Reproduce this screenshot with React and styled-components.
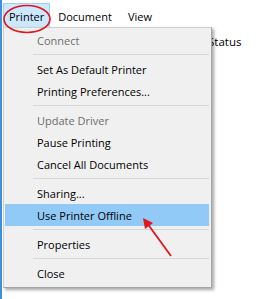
import React from "react";
import styled, { createGlobalStyle } from "styled-components";

const GlobalStyle = createGlobalStyle`
  html, body {
    margin: 0;
    padding: 0;
    background: #ffffff;
  }
  body {
    font-family: "Open Sans", "Liberation Sans", sans-serif;
    font-size: 11px;
    color: #000000;
  }
`;

const Window = styled.div`
  position: relative;
  width: 271px;
  height: 299px;
  overflow: hidden;
  background: #ffffff;
  border-left: 2px solid #3f8fe0;
  box-sizing: border-box;
`;

const MenuBar = styled.div`
  display: flex;
  align-items: stretch;
  height: 25px;
  margin-top: 3px;
  padding-left: 1px;
`;

const BarItem = styled.div`
  display: flex;
  align-items: center;
  padding: 0 ${(p) => p.$pad || 7}px;
  background: ${(p) => (p.$open ? "#cce8ff" : "transparent")};
  border: 1px solid ${(p) => (p.$open ? "#99d1ff" : "transparent")};
  border-bottom: none;
`;

const Content = styled.div`
  display: flex;
  justify-content: flex-end;
  padding: 4px 0 0 0;
`;

const ColumnHead = styled.div`
  width: 63px;
  height: 20px;
  line-height: 20px;
  font-size: 11.5px;
`;

const Dropdown = styled.div`
  position: absolute;
  left: 1px;
  top: 27px;
  width: 204px;
  padding: 1px 2px 3px 1px;
  background: #f0f0f0;
  border: 1px solid #cfcfcf;
  border-right-color: #a6a6a6;
  border-bottom-color: #a6a6a6;
  box-shadow: 2px 2px 3px rgba(0, 0, 0, 0.35);
  display: flex;
  flex-direction: column;
`;

const Item = styled.div`
  height: 22px;
  display: flex;
  align-items: center;
  padding-left: 32px;
  color: ${(p) => (p.$disabled ? "#6d6d6d" : "#000000")};
  background: ${(p) => (p.$hot ? "#91c9f7" : "transparent")};
`;

const Separator = styled.div`
  height: 1px;
  margin: 3px 0 3px 28px;
  background: #d7d7d7;
`;

const Overlay = styled.svg`
  position: absolute;
  left: -2px;
  top: 0;
  pointer-events: none;
`;

const menu = [
  { label: "Connect", disabled: true },
  "sep",
  { label: "Set As Default Printer" },
  { label: "Printing Preferences..." },
  "sep",
  { label: "Update Driver", disabled: true },
  { label: "Pause Printing" },
  { label: "Cancel All Documents" },
  "sep",
  { label: "Sharing..." },
  { label: "Use Printer Offline", hot: true },
  "sep",
  { label: "Properties" },
  "sep",
  { label: "Close" },
];

export default function App() {
  return (
    <>
      <GlobalStyle />
      <Window>
        <MenuBar>
          <BarItem $open $pad={5}>Printer</BarItem>
          <BarItem $pad={7}>Document</BarItem>
          <BarItem $pad={7}>View</BarItem>
        </MenuBar>
        <Content>
          <ColumnHead>Status</ColumnHead>
        </Content>

        <Dropdown>
          {menu.map((m, i) =>
            m === "sep" ? (
              <Separator key={i} />
            ) : (
              <Item key={i} $disabled={m.disabled} $hot={m.hot}>
                {m.label}
              </Item>
            )
          )}
        </Dropdown>

        <Overlay width="271" height="299" viewBox="0 0 271 299">
          <ellipse cx="27" cy="19" rx="23" ry="13.5" fill="none" stroke="#e3161b" strokeWidth="1.6" />
          <line x1="171" y1="256" x2="147" y2="223" stroke="#e3161b" strokeWidth="1.8" />
          <polygon points="143,218 153,223 145,229" fill="#e3161b" />
        </Overlay>
      </Window>
    </>
  );
}
